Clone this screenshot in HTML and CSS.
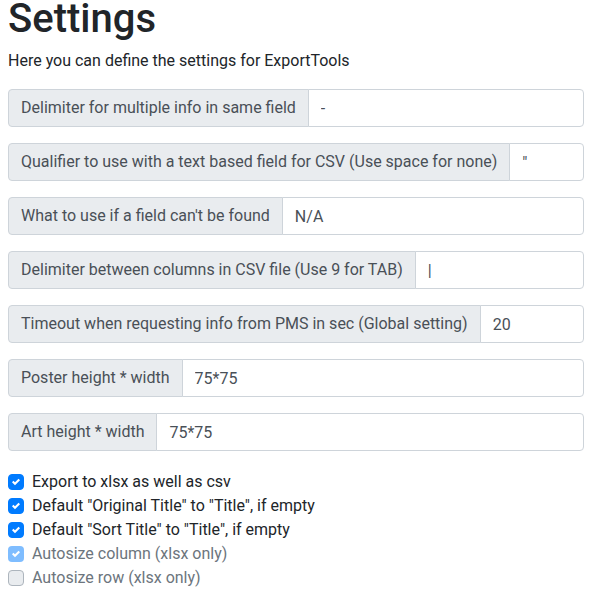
FILE: index.html
```html
<!DOCTYPE html>
<html>
<head>
<meta charset="utf-8">
<link rel="stylesheet" href="styles.css">
</head>
<body>
<h1 class="title">Settings</h1>
<p class="lead">Here you can define the settings for ExportTools</p>

<div class="group"><span class="addon">Delimiter for multiple info in same field</span><input class="field" type="text" value="-"></div>
<div class="group"><span class="addon">Qualifier to use with a text based field for CSV (Use space for none)</span><input class="field" type="text" value="&quot;"></div>
<div class="group"><span class="addon">What to use if a field can't be found</span><input class="field" type="text" value="N/A"></div>
<div class="group"><span class="addon">Delimiter between columns in CSV file (Use 9 for TAB)</span><input class="field" type="text" value="|"></div>
<div class="group"><span class="addon">Timeout when requesting info from PMS in sec (Global setting)</span><input class="field" type="text" value="20"></div>
<div class="group"><span class="addon">Poster height * width</span><input class="field" type="text" value="75*75"></div>
<div class="group"><span class="addon">Art height * width</span><input class="field" type="text" value="75*75"></div>

<div class="checks">
  <div class="check"><span class="box on"><svg viewBox="0 0 8 8" width="8" height="8"><path fill="#fff" d="M6.564.75l-3.59 3.612-1.538-1.55L0 4.26l2.974 2.99L8 2.193z"/></svg></span><span class="label">Export to xlsx as well as csv</span></div>
  <div class="check"><span class="box on"><svg viewBox="0 0 8 8" width="8" height="8"><path fill="#fff" d="M6.564.75l-3.59 3.612-1.538-1.55L0 4.26l2.974 2.99L8 2.193z"/></svg></span><span class="label">Default "Original Title" to "Title", if empty</span></div>
  <div class="check"><span class="box on"><svg viewBox="0 0 8 8" width="8" height="8"><path fill="#fff" d="M6.564.75l-3.59 3.612-1.538-1.55L0 4.26l2.974 2.99L8 2.193z"/></svg></span><span class="label">Default "Sort Title" to "Title", if empty</span></div>
  <div class="check disabled"><span class="box on-disabled"><svg viewBox="0 0 8 8" width="8" height="8"><path fill="#fff" d="M6.564.75l-3.59 3.612-1.538-1.55L0 4.26l2.974 2.99L8 2.193z"/></svg></span><span class="label">Autosize column (xlsx only)</span></div>
  <div class="check disabled"><span class="box off-disabled"></span><span class="label">Autosize row (xlsx only)</span></div>
</div>
</body>
</html>
```
FILE: styles.css
```css
* { box-sizing: border-box; }
html, body { margin: 0; padding: 0; background: #fff; }
body {
  padding: 0 8px;
  font-family: Roboto, "Open Sans", sans-serif;
  font-size: 16px;
  line-height: 24px;
  color: #212529;
}
.title {
  margin: 0 0 11px;
  font-size: 40px;
  line-height: 38px;
  font-weight: 500;
}
.lead {
  margin: 0 0 16px;
}
.group {
  display: flex;
  width: 576px;
  height: 38px;
  margin-bottom: 16px;
}
.addon {
  display: flex;
  align-items: center;
  padding: 6px 12px;
  background: #e9ecef;
  border: 1px solid #ced4da;
  border-radius: 4px 0 0 4px;
  color: #495057;
  white-space: nowrap;
}
.field {
  flex: 1;
  min-width: 0;
  height: 38px;
  padding: 6px 12px;
  margin-left: -1px;
  border: 1px solid #ced4da;
  border-radius: 0 4px 4px 0;
  font: inherit;
  color: #495057;
  background: #fff;
  outline: none;
}
.checks {
  margin-top: 19px;
}
.check {
  display: flex;
  align-items: flex-start;
  height: 24px;
}
.box {
  width: 16px;
  height: 16px;
  margin-top: 4px;
  margin-right: 8px;
  border-radius: 4px;
  border: 1px solid #adb5bd;
  display: flex;
  align-items: center;
  justify-content: center;
  flex: none;
}
.box.on { background: #007bff; border-color: #007bff; }
.box.on-disabled { background: rgba(0,123,255,.5); border-color: rgba(0,123,255,0); }
.box.off-disabled { background: #e9ecef; border-color: #adb5bd; }
.check.disabled .label { color: #6c757d; }
```
